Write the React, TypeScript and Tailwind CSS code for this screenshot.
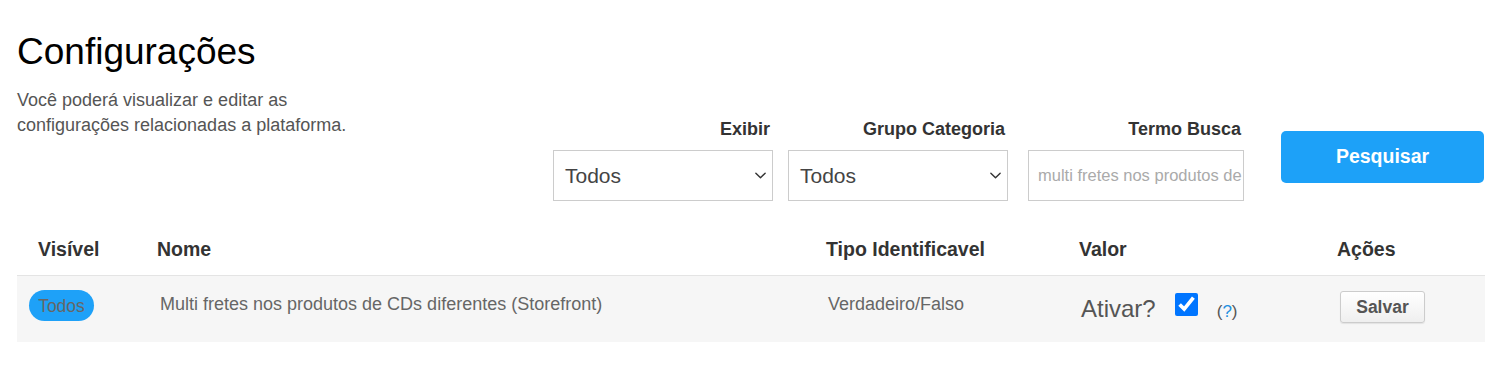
import React, { useState } from 'react';

const font = { fontFamily: '"Liberation Sans", Arial, sans-serif' };

function Chevron() {
  return (
    <svg className="w-[13px] h-[13px] text-[#333]" viewBox="0 0 14 14" fill="none">
      <path d="M2 4.5 L7 9.5 L12 4.5" stroke="currentColor" strokeWidth="1.5" strokeLinecap="round" strokeLinejoin="round" />
    </svg>
  );
}

function FakeSelect({ label, className }: { label: string; className: string }) {
  return (
    <div className={`flex flex-col items-end ${className}`}>
      <span className="text-[18px] font-bold text-[#333] leading-[20px] mb-[11px] mr-[3px]">{label}</span>
      <div className="w-full h-[51px] border border-[#ccc] bg-white flex items-center justify-between pl-[11px] pr-[5px]">
        <span className="text-[21px] text-[#444]">Todos</span>
        <Chevron />
      </div>
    </div>
  );
}

export default function App() {
  const [ativo, setAtivo] = useState(true);
  return (
    <div className="bg-white w-[1495px] h-[381px] overflow-hidden pl-[17px] pr-[11px]" style={font}>
      <h1 className="text-[37px] leading-[44px] text-black pt-[30px]">Configurações</h1>
      <div className="flex items-start">
        <p className="text-[18px] leading-[25px] text-[#555] w-[340px] mt-[14px]">
          Você poderá visualizar e editar as configurações relacionadas a plataforma.
        </p>
        <div className="flex items-start ml-[200px] mt-[45px]">
          <FakeSelect label="Exibir" className="w-[220px]" />
          <FakeSelect label="Grupo Categoria" className="w-[220px] ml-[15px]" />
          <div className="flex flex-col items-end w-[216px] ml-[20px]">
            <span className="text-[18px] font-bold text-[#333] leading-[20px] mb-[11px] mr-[3px]">Termo Busca</span>
            <input
              className="w-full h-[51px] border border-[#ccc] bg-white pl-[9px] text-[16.5px] placeholder:text-[#aaa] outline-none"
              placeholder="multi fretes nos produtos de CDs diferentes"
            />
          </div>
          <button className="ml-[37px] mt-[12px] w-[203px] h-[52px] rounded-[5px] bg-[#1da1f8] text-white text-[19.5px] font-bold">
            Pesquisar
          </button>
        </div>
      </div>
      <table className="w-[1468px] mt-[24px] border-collapse">
        <thead>
          <tr className="h-[50px] border-b border-[#e4e4e4] text-left text-[19.5px] text-[#333]">
            <th className="w-[128px] pl-[21px] font-bold">Visível</th>
            <th className="w-[669px] pl-[12px] font-bold">Nome</th>
            <th className="w-[253px] pl-[12px] font-bold">Tipo Identificavel</th>
            <th className="w-[258px] pl-[12px] font-bold">Valor</th>
            <th className="pl-[12px] font-bold">Ações</th>
          </tr>
        </thead>
        <tbody>
          <tr className="h-[67px] bg-[#f6f6f6] text-[18px] text-[#666]">
            <td className="pl-[12px] align-middle">
              <span className="relative -top-[3px] inline-flex items-center justify-center w-[65px] h-[31px] rounded-full bg-[#1ea1f8] text-[#666] text-[17.5px]">
                Todos
              </span>
            </td>
            <td className="pl-[15px] align-middle">
              <span className="relative -top-[4px]">Multi fretes nos produtos de CDs diferentes (Storefront)</span>
            </td>
            <td className="pl-[14px] align-middle">
              <span className="relative -top-[4px]">Verdadeiro/Falso</span>
            </td>
            <td className="pl-[14px] align-middle">
              <div className="flex items-center">
                <span className="text-[24px] text-[#555]">Ativar?</span>
                <input
                  type="checkbox"
                  checked={ativo}
                  onChange={() => setAtivo(!ativo)}
                  className="relative -top-[4px] w-[23px] h-[23px] ml-[19px] m-0"
                />
                <span className="relative top-[3px] ml-[19px] text-[17px] text-[#555]">
                  (<span className="text-[#1e90e0]">?</span>)
                </span>
              </div>
            </td>
            <td className="pl-[15px] align-middle">
              <button className="relative -top-[2px] w-[85px] h-[32px] rounded-[3px] border border-[#ccc] bg-gradient-to-b from-white to-[#efefef] shadow-[0_1px_1px_rgba(0,0,0,0.08)] text-[17.5px] font-bold text-[#555]">
                Salvar
              </button>
            </td>
          </tr>
        </tbody>
      </table>
    </div>
  );
}
